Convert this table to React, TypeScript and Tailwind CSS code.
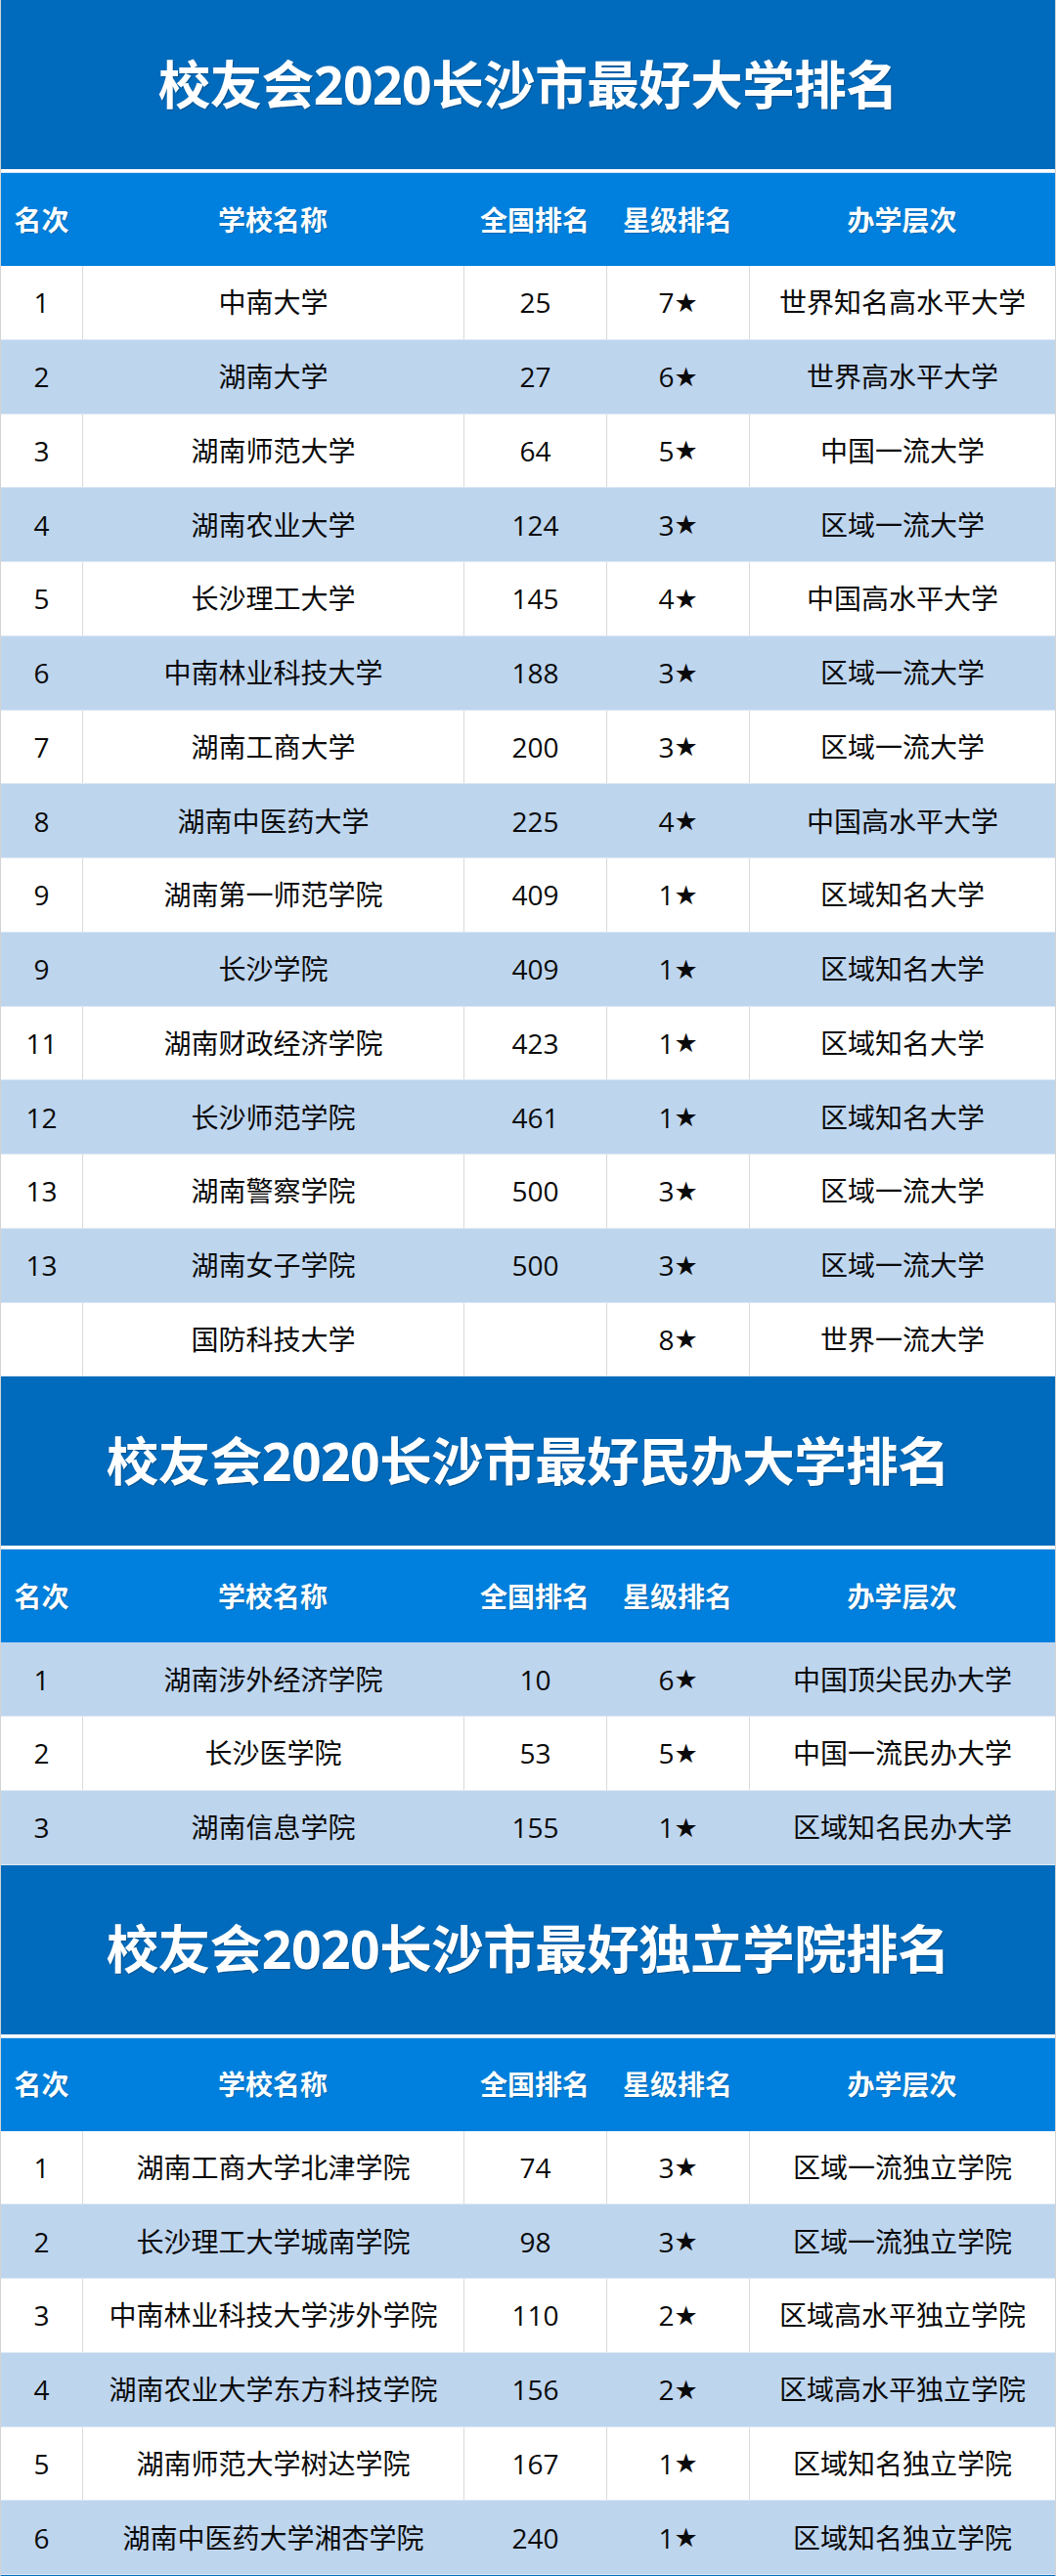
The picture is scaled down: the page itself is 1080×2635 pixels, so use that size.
import React from 'react';

type Row = { rank: string; name: string; national: string; star: string; level: string };

const cityTop: Row[] = [
  { rank: '1', name: '中南大学', national: '25', star: '7', level: '世界知名高水平大学' },
  { rank: '2', name: '湖南大学', national: '27', star: '6', level: '世界高水平大学' },
  { rank: '3', name: '湖南师范大学', national: '64', star: '5', level: '中国一流大学' },
  { rank: '4', name: '湖南农业大学', national: '124', star: '3', level: '区域一流大学' },
  { rank: '5', name: '长沙理工大学', national: '145', star: '4', level: '中国高水平大学' },
  { rank: '6', name: '中南林业科技大学', national: '188', star: '3', level: '区域一流大学' },
  { rank: '7', name: '湖南工商大学', national: '200', star: '3', level: '区域一流大学' },
  { rank: '8', name: '湖南中医药大学', national: '225', star: '4', level: '中国高水平大学' },
  { rank: '9', name: '湖南第一师范学院', national: '409', star: '1', level: '区域知名大学' },
  { rank: '9', name: '长沙学院', national: '409', star: '1', level: '区域知名大学' },
  { rank: '11', name: '湖南财政经济学院', national: '423', star: '1', level: '区域知名大学' },
  { rank: '12', name: '长沙师范学院', national: '461', star: '1', level: '区域知名大学' },
  { rank: '13', name: '湖南警察学院', national: '500', star: '3', level: '区域一流大学' },
  { rank: '13', name: '湖南女子学院', national: '500', star: '3', level: '区域一流大学' },
  { rank: '', name: '国防科技大学', national: '', star: '8', level: '世界一流大学' },
];

const privateTop: Row[] = [
  { rank: '1', name: '湖南涉外经济学院', national: '10', star: '6', level: '中国顶尖民办大学' },
  { rank: '2', name: '长沙医学院', national: '53', star: '5', level: '中国一流民办大学' },
  { rank: '3', name: '湖南信息学院', national: '155', star: '1', level: '区域知名民办大学' },
];

const independentTop: Row[] = [
  { rank: '1', name: '湖南工商大学北津学院', national: '74', star: '3', level: '区域一流独立学院' },
  { rank: '2', name: '长沙理工大学城南学院', national: '98', star: '3', level: '区域一流独立学院' },
  { rank: '3', name: '中南林业科技大学涉外学院', national: '110', star: '2', level: '区域高水平独立学院' },
  { rank: '4', name: '湖南农业大学东方科技学院', national: '156', star: '2', level: '区域高水平独立学院' },
  { rank: '5', name: '湖南师范大学树达学院', national: '167', star: '1', level: '区域知名独立学院' },
  { rank: '6', name: '湖南中医药大学湘杏学院', national: '240', star: '1', level: '区域知名独立学院' },
];

const headers = ['名次', '学校名称', '全国排名', '星级排名', '办学层次'];

const cols = 'grid grid-cols-[83px_390px_146px_146px_1fr]';

const RankTable: React.FC<{ title: string; rows: Row[]; startBlue?: boolean }> = ({ title, rows, startBlue }) => {
  return (
    <section>
      <div className="h-[173px] bg-[#006bbc] flex items-center justify-center">
        <h1 className="text-white font-bold text-[53.5px] leading-none tracking-[-0.5px] [text-shadow:1px_1px_1px_rgba(0,0,0,0.25)]">
          {title}
        </h1>
      </div>
      <div className="h-[4px] bg-white border-b border-[#cfe3f6]" />
      <div className={`${cols} h-[95px] bg-[#0080de] text-white font-bold text-[28px] leading-none`}>
        {headers.map(h => (
          <div key={h} className="flex items-center justify-center [text-shadow:1px_1px_1px_rgba(0,0,0,0.2)]">
            {h}
          </div>
        ))}
      </div>
      {rows.map((r, i) => {
        const blue = startBlue ? i % 2 === 0 : i % 2 === 1;
        const line = blue ? 'border-l border-[#bed5ee]' : 'border-l border-[#dadada]';
        return (
          <div
            key={i}
            className={`${cols} h-[75.75px] border-b border-[#dde8f4] text-[28px] leading-none text-[#0a0a0a] ${blue ? 'bg-[#bed5ee]' : 'bg-white'}`}
          >
            <div className="flex items-center justify-center">{r.rank}</div>
            <div className={`flex items-center justify-center ${line}`}>{r.name}</div>
            <div className={`flex items-center justify-center ${line}`}>{r.national}</div>
            <div className={`flex items-center justify-center ${line}`}>
              {r.star}
              <span className="font-['DejaVu_Sans',sans-serif] text-[27px]">★</span>
            </div>
            <div className={`flex items-center justify-center ${line}`}>{r.level}</div>
          </div>
        );
      })}
    </section>
  );
};

export default function App() {
  return (
    <div className="w-[1080px] bg-white border-x border-[#d3d3d3] border-b-2 border-b-[#0070c0] font-['Open_Sans','Noto_Sans_CJK_SC',sans-serif]">
      <RankTable title="校友会2020长沙市最好大学排名" rows={cityTop} />
      <RankTable title="校友会2020长沙市最好民办大学排名" rows={privateTop} startBlue />
      <RankTable title="校友会2020长沙市最好独立学院排名" rows={independentTop} />
    </div>
  );
}
